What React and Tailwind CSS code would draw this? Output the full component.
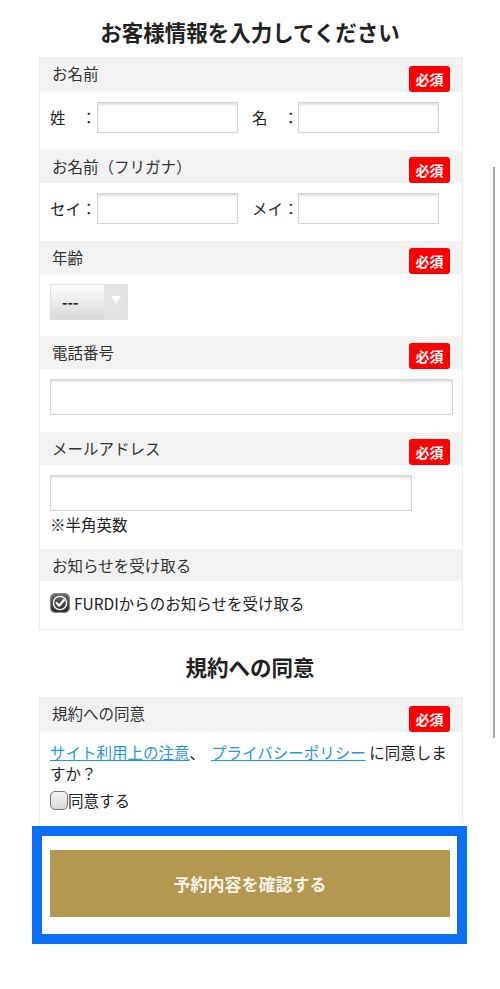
import React from 'react'

const font = { fontFamily: '"Noto Sans CJK JP", "Noto Sans", sans-serif' }

function Badge() {
  return (
    <span className="self-end flex h-[26px] w-[41px] items-center justify-center rounded-[3px] bg-[#ff0000] text-[14px] font-bold text-white">
      必須
    </span>
  )
}

function SectionHeader({ label, required, h = 'h-[34px]' }) {
  return (
    <div className={`flex ${h} items-start justify-between bg-[#f2f2f2] pl-[12px] pr-[12px]`}>
      <span className="pt-[6px] text-[15.5px] leading-[20px] text-[#333]">{label}</span>
      {required && <Badge />}
    </div>
  )
}

function TextInput({ className }) {
  return (
    <div className={`border border-[#d4d4d4] bg-white shadow-[inset_0_2px_2px_rgba(0,0,0,0.12)] ${className}`} />
  )
}

function NameRow({ a, b }) {
  return (
    <div className="flex items-center pl-[10px] pt-[10px] pb-[17px]">
      <div className="flex items-center">
        <span className="w-[47px] shrink-0 whitespace-nowrap text-[15.5px] text-[#222]">{a}</span>
        <TextInput className="h-[31px] w-[141px] shrink-0" />
      </div>
      <div className="ml-[14px] flex items-center">
        <span className="w-[46px] shrink-0 whitespace-nowrap text-[15.5px] text-[#222]">{b}</span>
        <TextInput className="h-[31px] w-[141px] shrink-0" />
      </div>
    </div>
  )
}

function Checked() {
  return (
    <span className="flex h-[18px] w-[18px] items-center justify-center rounded-[4px] bg-gradient-to-b from-[#6a6a6a] to-[#2e2e2e] shadow-[0_0_0_1px_#8a8a8a]">
      <svg viewBox="0 0 16 16" className="h-[16px] w-[16px]">
        <circle cx="8" cy="8" r="6.6" fill="none" stroke="#fff" strokeWidth="1.3" />
        <path d="M4.6 8.1 L7.1 10.7 L11.8 5.2" fill="none" stroke="#fff" strokeWidth="2.2" strokeLinecap="round" strokeLinejoin="round" />
      </svg>
    </span>
  )
}

function Unchecked() {
  return (
    <span className="h-[19px] w-[18px] rounded-[5px] border border-[#777] bg-gradient-to-b from-[#f4f4f4] to-[#d8d8d8]" />
  )
}

export default function App() {
  return (
    <div className="relative h-[989px] w-[500px] overflow-hidden bg-white" style={font}>
      <h1 className="pt-[16px] pb-[10px] text-center text-[21.5px] font-bold leading-[31px] text-[#222]">
        お客様情報を入力してください
      </h1>

      <div className="ml-[39px] w-[424px] border border-t-0 border-[#ececec]">
        <SectionHeader label="お名前" required h="h-[35px]" />
        <NameRow a={<>姓　：</>} b={<>名　：</>} />

        <SectionHeader label="お名前（フリガナ）" required h="h-[33px]" />
        <NameRow a="セイ：" b="メイ：" />

        <SectionHeader label="年齢" required h="h-[33px]" />
        <div className="pl-[10px] pt-[10px] pb-[16px]">
          <div className="flex h-[36px] w-[78px] border border-[#e0e0e0]">
            <div className="flex w-[53px] items-center pl-[11px] bg-gradient-to-b from-[#fdfdfd] to-[#d9d9d9] text-[15px] font-bold text-[#222]">
              ---
            </div>
            <div className="flex flex-1 items-start justify-center bg-[#e4e4e4] pt-[11px]">
              <svg width="10" height="8" viewBox="0 0 10 8">
                <path d="M0 0 H10 L5 8 Z" fill="#fff" />
              </svg>
            </div>
          </div>
        </div>

        <SectionHeader label="電話番号" required h="h-[33px]" />
        <div className="pl-[10px] pr-[9px] pt-[10px] pb-[17px]">
          <TextInput className="h-[36px] w-full" />
        </div>

        <SectionHeader label="メールアドレス" required h="h-[33px]" />
        <div className="pl-[10px] pt-[10px] pb-[14px]">
          <TextInput className="h-[36px] w-[362px]" />
          <p className="mt-[2px] text-[15.5px] leading-[22px] text-[#222]">※半角英数</p>
        </div>

        <SectionHeader label="お知らせを受け取る" h="h-[32px]" />
        <div className="flex items-center gap-[5px] pl-[11px] pt-[11px] pb-[15px]">
          <Checked />
          <span className="text-[15.5px] leading-[22px] text-[#222]">FURDIからのお知らせを受け取る</span>
        </div>
      </div>

      <h2 className="pt-[21px] pb-[15px] text-center text-[21.5px] font-bold leading-[31px] text-[#222]">
        規約への同意
      </h2>

      <div className="ml-[39px] w-[424px] border-x border-[#ececec]">
        <SectionHeader label="規約への同意" required h="h-[35px]" />
        <div className="pl-[10px] pr-[8px] pt-[10px] pb-[15px] text-[15.5px] leading-[21px] text-[#222]">
          <p className="whitespace-nowrap">
            <span className="text-[#1e9ad8] underline">サイト利用上の注意</span>、
            <span className="ml-[6px] text-[#1e9ad8] underline">プライバシーポリシー</span> に同意しま
          </p>
          <p>すか？</p>
          <div className="mt-[6px] flex items-center">
            <Unchecked />
            <span className="leading-[21px]">同意する</span>
          </div>
        </div>
      </div>

      <div className="ml-[32px] w-[435px] border-[10px] border-[#0a6ff6] bg-white pt-[14px] pb-[17px] pl-[8px] pr-[7px]">
        <button className="flex h-[67px] w-full items-center justify-center bg-[#b59850] text-[17px] font-bold text-[#f7f3ea]">
          予約内容を確認する
        </button>
      </div>

      <div className="absolute left-[493px] top-[167px] h-[571px] w-[2px] bg-[#a6a6a6]" />
    </div>
  )
}
